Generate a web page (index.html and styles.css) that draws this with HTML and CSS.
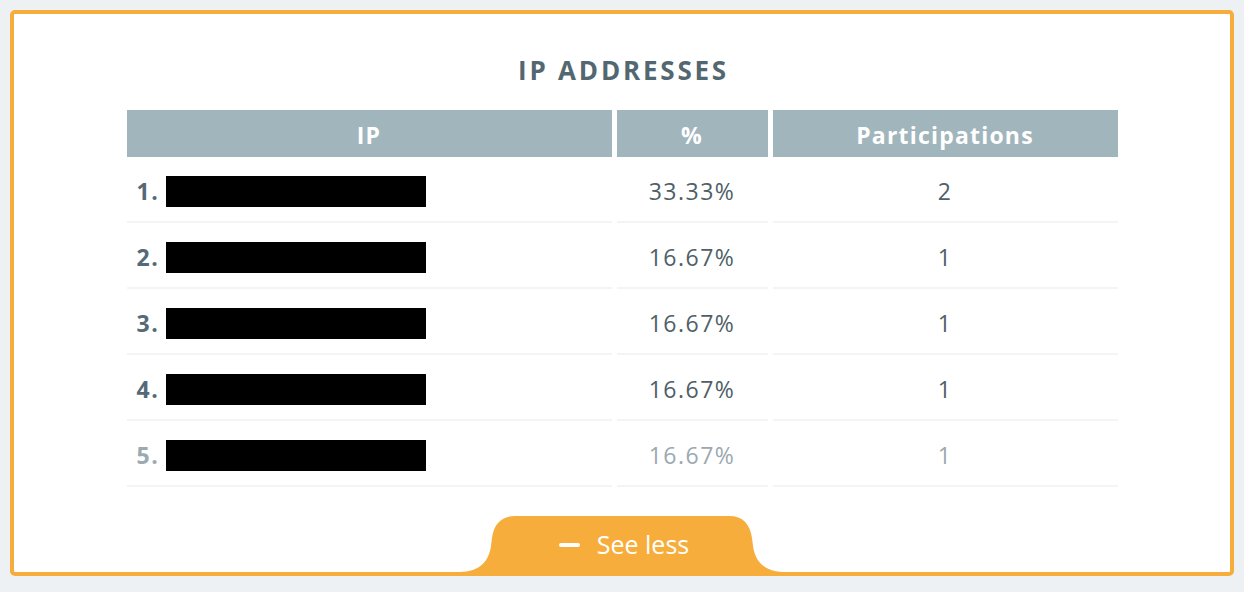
FILE: index.html
```html
<!DOCTYPE html>
<html lang="en">
<head>
    <meta charset="UTF-8">
    <meta name="viewport" content="width=device-width, initial-scale=1.0">
    <link rel="stylesheet" href="styles.css">
    <title>IP Addresses</title>
</head>
<body>
    <div class="card">
        <h2 class="title">IP ADDRESSES</h2>

        <div class="ip-table">
            <div class="head">IP</div>
            <div class="head">%</div>
            <div class="head">Participations</div>

            <div class="cell ip"><span class="rank">1.</span><span class="redacted"></span></div>
            <div class="cell">33.33%</div>
            <div class="cell">2</div>

            <div class="cell ip"><span class="rank">2.</span><span class="redacted"></span></div>
            <div class="cell">16.67%</div>
            <div class="cell">1</div>

            <div class="cell ip"><span class="rank">3.</span><span class="redacted"></span></div>
            <div class="cell">16.67%</div>
            <div class="cell">1</div>

            <div class="cell ip"><span class="rank">4.</span><span class="redacted"></span></div>
            <div class="cell">16.67%</div>
            <div class="cell">1</div>

            <div class="cell ip faded"><span class="rank">5.</span><span class="redacted"></span></div>
            <div class="cell faded">16.67%</div>
            <div class="cell faded">1</div>
        </div>

        <div class="footer">
            <button class="see-less">
                <svg class="tab-shape" width="326" height="56" viewBox="0 0 326 56">
                    <path d="M0 56 C22 56 30 44 32 30 L33 22 C35 8 42 0 56 0 L270 0 C284 0 291 8 293 22 L294 30 C296 44 304 56 326 56 Z" fill="#f7ad3c"/>
                </svg>
                <span class="minus"></span>
                <span class="label">See less</span>
            </button>
        </div>
    </div>
</body>
</html>
```

FILE: styles.css
```css
body {
    margin: 0;
    padding: 10px;
    background-color: #edf1f4;
    font-family: "Open Sans", "DejaVu Sans", sans-serif;
}

.card {
    box-sizing: border-box;
    height: 566px;
    background-color: white;
    border: 4px solid #f7ad3c;
    border-radius: 5px;
    padding-top: 41px;
    display: flex;
    flex-direction: column;
    align-items: center;
}

.title {
    margin: 0 0 25px;
    padding-left: 3px;
    height: 30px;
    line-height: 30px;
    font-size: 26px;
    font-weight: 700;
    letter-spacing: 2.8px;
    color: #536771;
}

.ip-table {
    width: 991px;
    display: grid;
    grid-template-columns: 485px 151px 345px;
    column-gap: 5px;
}

.head {
    height: 47px;
    padding-top: 2px;
    box-sizing: border-box;
    background-color: #a1b5bc;
    color: white;
    font-size: 23px;
    font-weight: 700;
    letter-spacing: 1.2px;
    display: flex;
    align-items: center;
    justify-content: center;
}

.cell {
    height: 60px;
    padding-top: 4px;
    border-bottom: 2px solid #f2f4f5;
    display: flex;
    align-items: center;
    justify-content: center;
    font-size: 23px;
    letter-spacing: 1.5px;
    color: #4f5f68;
}

.cell.ip {
    justify-content: flex-start;
    padding-left: 10px;
}

.rank {
    font-weight: 700;
    color: #546a76;
    width: 29px;
}

.redacted {
    display: inline-block;
    width: 260px;
    height: 31px;
    background-color: black;
}

.faded,
.faded .rank {
    color: #9ba9b0;
}

.footer {
    margin-top: auto;
    display: flex;
    justify-content: center;
}

.see-less {
    position: relative;
    width: 326px;
    height: 56px;
    border: none;
    background: none;
    padding: 0 0 0 4px;
    display: flex;
    align-items: center;
    justify-content: center;
    gap: 17px;
    color: white;
    font-family: inherit;
    font-size: 25px;
    cursor: pointer;
}

.tab-shape {
    position: absolute;
    left: 0;
    top: 0;
}

.minus {
    position: relative;
    width: 21px;
    height: 4px;
    border-radius: 2px;
    background-color: white;
    margin-top: 2px;
}

.label {
    position: relative;
}
```
